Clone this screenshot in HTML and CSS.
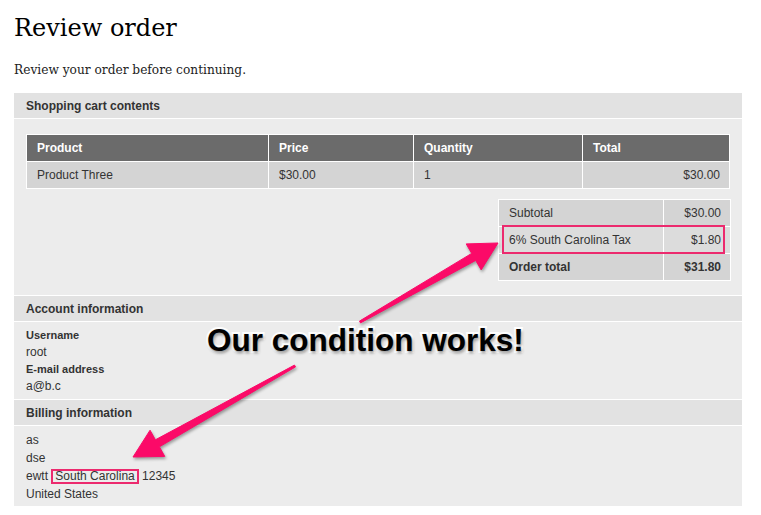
FILE: index.html
```html
<!DOCTYPE html>
<html lang="en">
<head>
<meta charset="utf-8">
<title>Review order</title>
<link rel="stylesheet" href="styles.css">
</head>
<body>
<div class="page">
  <h1 class="title">Review order</h1>
  <p class="intro">Review your order before continuing.</p>

  <div class="panel">
    <section class="pane">
      <div class="pane-head">Shopping cart contents</div>
      <div class="pane-body cart-body">
        <table class="cart">
          <colgroup>
            <col class="c-product"><col class="c-price"><col class="c-qty"><col class="c-total">
          </colgroup>
          <thead>
            <tr><th>Product</th><th>Price</th><th>Quantity</th><th>Total</th></tr>
          </thead>
          <tbody>
            <tr><td>Product Three</td><td>$30.00</td><td>1</td><td class="num">$30.00</td></tr>
          </tbody>
        </table>
        <div class="totals-wrap">
          <table class="totals">
            <colgroup><col class="c-label"><col class="c-amount"></colgroup>
            <tr><td>Subtotal</td><td class="num">$30.00</td></tr>
            <tr class="tax"><td>6% South Carolina Tax</td><td class="num">$1.80</td></tr>
            <tr class="grand"><td>Order total</td><td class="num">$31.80</td></tr>
          </table>
          <div class="highlight-row"></div>
        </div>
      </div>
    </section>

    <section class="pane">
      <div class="pane-head">Account information</div>
      <div class="pane-body account-body">
        <div class="label">Username</div>
        <div class="value">root</div>
        <div class="label">E-mail address</div>
        <div class="value">a@b.c</div>
      </div>
    </section>

    <section class="pane">
      <div class="pane-head">Billing information</div>
      <div class="pane-body billing-body">
        <div>as</div>
        <div>dse</div>
        <div>ewtt <span class="mark">South Carolina</span> 12345</div>
        <div>United States</div>
      </div>
    </section>
  </div>
</div>

<svg class="arrows" width="761" height="515" viewBox="0 0 761 515" aria-hidden="true">
  <polygon points="359.5,321.1 471.7,253.4 466.2,243.9 498,243 481.2,269.9 475.7,260.4 360.5,322.9"/>
  <polygon points="294.5,365.1 155.4,439.8 150.05,430.2 133,457 164.75,456.4 159.4,446.8 295.5,366.9"/>
</svg>
<div class="callout">Our condition works!</div>
</body>
</html>
```
FILE: styles.css
```css
html, body {
  margin: 0;
  padding: 0;
  background: #ffffff;
}

body {
  position: relative;
  width: 761px;
  height: 515px;
  overflow: hidden;
}

.page {
  padding: 0 19px 0 14px;
}

.title {
  margin: 14px 0 0;
  font-family: "DejaVu Serif", Georgia, serif;
  font-weight: normal;
  font-size: 24px;
  line-height: 28px;
  color: #000;
}

.intro {
  margin: 20px 0 15px;
  font-family: "DejaVu Serif", Georgia, serif;
  font-size: 12.2px;
  line-height: 16px;
  color: #222;
}

.panel {
  font-family: "Liberation Sans", Arial, Helvetica, sans-serif;
  font-size: 12px;
  color: #333;
  width: 728px;
}

.pane + .pane {
  border-top: 1px solid #ffffff;
}

.pane-head {
  height: 24px;
  line-height: 25px;
  padding: 1px 12px 0;
  background: #e2e2e2;
  border-bottom: 1px solid #ffffff;
  font-weight: bold;
  font-size: 12px;
  color: #333;
  overflow: hidden;
}

.pane-body {
  background: #ececec;
  padding: 0 12px;
}

.cart-body {
  padding-top: 15px;
  padding-bottom: 14px;
}

.cart {
  width: 704px;
  border-collapse: collapse;
  table-layout: fixed;
  border: 1px solid #ffffff;
}

.c-product { width: 242px; }
.c-price { width: 145px; }
.c-qty { width: 169px; }
.c-total { width: 147px; }

.cart th,
.cart td {
  border: 1px solid #ffffff;
  height: 26px;
  padding: 0 9px 0 10px;
  text-align: left;
  font-size: 12px;
}

.cart th {
  background: #6b6b6b;
  color: #ffffff;
  font-weight: bold;
}

.cart td {
  background: #d4d4d4;
  color: #333;
}

.cart td.num,
.totals td.num {
  text-align: right;
}

.totals-wrap {
  position: relative;
  width: 232px;
  margin: 10px 0 0 auto;
}

.totals {
  width: 232px;
  border-collapse: collapse;
  table-layout: fixed;
  border: 1px solid #ffffff;
}

.c-label { width: 165px; }
.c-amount { width: 67px; }

.totals td {
  border: 1px solid #ffffff;
  height: 26px;
  padding: 0 9px 0 10px;
  background: #d4d4d4;
  color: #333;
  font-size: 12px;
}

.totals tr.tax td {
  background: #dcdcdc;
}

.totals tr.grand td {
  font-weight: bold;
}

.highlight-row {
  position: absolute;
  left: 4px;
  top: 26px;
  width: 219px;
  height: 25px;
  border: 2px solid #ec2a6e;
}

.account-body {
  padding-top: 5px;
  padding-bottom: 4px;
  line-height: 17px;
}

.account-body .label {
  font-weight: bold;
  font-size: 11px;
}

.account-body .value {
  font-size: 12px;
}

.billing-body {
  padding-top: 5px;
  padding-bottom: 3px;
  line-height: 18px;
}

.mark {
  display: inline-block;
  line-height: 11px;
  padding: 0 2px;
  border: 2px solid #ec2a6e;
}

.arrows {
  position: absolute;
  left: 0;
  top: 0;
  pointer-events: none;
  filter: drop-shadow(1px 2px 1.5px rgba(0, 0, 0, 0.35));
}

.arrows polygon {
  fill: #fb0a68;
  stroke: #fb0a68;
  stroke-width: 1;
  stroke-linejoin: round;
}

.callout {
  position: absolute;
  left: 207px;
  top: 322px;
  font-family: "Liberation Sans", Arial, Helvetica, sans-serif;
  font-weight: bold;
  font-size: 31.5px;
  line-height: 36px;
  color: #000;
  white-space: nowrap;
  -webkit-text-stroke: 4px #ffffff;
  paint-order: stroke fill;
  text-shadow: 1px 2px 3px rgba(0, 0, 0, 0.45);
}
```
